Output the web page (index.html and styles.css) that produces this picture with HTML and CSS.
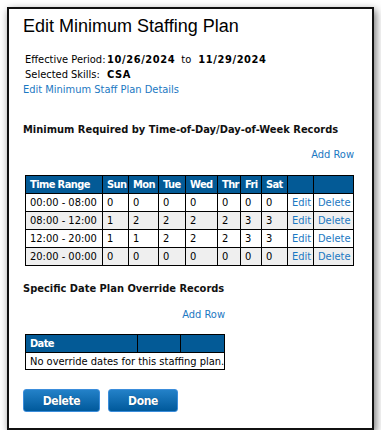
FILE: index.html
```html
<!DOCTYPE html>
<html lang="en">
<head>
  <meta charset="UTF-8" />
  <title>Edit Minimum Staffing Plan</title>
  <link rel="stylesheet" href="styles.css">
</head>
<body>

  <div class="dialog">
    <h1 class="dialog-title">Edit Minimum Staffing Plan</h1>

    <!-- Hlavicka planu -->
    <div class="plan-info">
      <span class="info-label">Effective Period:</span>
      <span class="info-value"><b>10/26/2024</b><span class="to">to</span><b>11/29/2024</b></span>
      <span class="info-label">Selected Skills:</span>
      <span class="info-value"><b>CSA</b></span>
    </div>
    <a href="#" class="link">Edit Minimum Staff Plan Details</a>

    <!-- Casove zaznamy -->
    <h2 class="section-title">Minimum Required by Time-of-Day/Day-of-Week Records</h2>
    <div class="records">
      <div class="add-row"><a href="#" class="link">Add Row</a></div>
      <table class="grid week-grid">
        <colgroup>
          <col style="width:77px"><col style="width:26px"><col style="width:30px"><col style="width:27px">
          <col style="width:32px"><col style="width:23px"><col style="width:21px"><col style="width:26px">
          <col style="width:26px"><col style="width:40px">
        </colgroup>
        <thead>
          <tr>
            <th>Time Range</th><th>Sun</th><th>Mon</th><th>Tue</th><th>Wed</th><th>Thr</th><th>Fri</th><th>Sat</th><th></th><th></th>
          </tr>
        </thead>
        <tbody id="week-rows"></tbody>
      </table>
    </div>

    <!-- Vynimky pre konkretne datumy -->
    <h2 class="section-title second">Specific Date Plan Override Records</h2>
    <div class="records narrow">
      <div class="add-row"><a href="#" class="link">Add Row</a></div>
      <table class="grid date-grid">
        <colgroup>
          <col style="width:112px"><col style="width:43px"><col style="width:44px">
        </colgroup>
        <thead>
          <tr><th>Date</th><th></th><th></th></tr>
        </thead>
        <tbody>
          <tr><td colspan="3">No override dates for this staffing plan.</td></tr>
        </tbody>
      </table>
    </div>

    <div class="actions">
      <button class="btn btn-delete">Delete</button>
      <button class="btn btn-done">Done</button>
    </div>
  </div>

<script>
  const rows = [
    {range: "00:00 - 08:00", counts: [0, 0, 0, 0, 0, 0, 0]},
    {range: "08:00 - 12:00", counts: [1, 2, 2, 2, 2, 3, 3]},
    {range: "12:00 - 20:00", counts: [1, 1, 2, 2, 2, 3, 3]},
    {range: "20:00 - 00:00", counts: [0, 0, 0, 0, 0, 0, 0]}
  ];

  const body = document.getElementById("week-rows");
  rows.forEach(row => {
    const tr = document.createElement("tr");
    tr.innerHTML = `
      <td>${row.range}</td>
      ${row.counts.map(c => `<td>${c}</td>`).join("")}
      <td><a href="#" class="link">Edit</a></td>
      <td><a href="#" class="link">Delete</a></td>
    `;
    body.appendChild(tr);
  });
</script>

</body>
</html>
```

FILE: styles.css
```css
body {
  margin: 0;
  background: #fff;
  font-family: "DejaVu Sans Condensed", "DejaVu Sans", Tahoma, sans-serif;
  font-size: 11px;
  line-height: 15px;
  color: #000;
}

.dialog {
  margin: 7px 0 0 7px;
  width: 363px;
  height: 419px;
  box-sizing: content-box;
  border: 2px solid #111;
  background: #fff;
  box-shadow: 2px 3px 8px rgba(0,0,0,0.55);
  padding: 0;
  position: relative;
}

.dialog-title {
  font-family: "Liberation Sans", Arial, sans-serif;
  font-weight: normal;
  font-size: 18px;
  line-height: 21px;
  margin: 7px 0 0 14px;
}

/* Informacie o plane */
.plan-info {
  display: grid;
  grid-template-columns: 82px auto;
  margin: 15px 0 0 16px;
}

.info-value b {
  font-weight: bold;
  letter-spacing: 0.6px;
}

.to {
  margin: 0 7px 0 6px;
}

.link {
  color: #1b78c2;
  text-decoration: none;
}

.dialog > .link {
  display: block;
  margin-left: 14px;
}

.section-title {
  font-size: 11px;
  line-height: 15px;
  font-weight: bold;
  margin: 25px 0 0 14px;
  color: #111;
}

.section-title.second {
  margin-top: 15px;
}

.records {
  width: 329px;
  margin: 10px 0 0 16px;
}

.records.narrow {
  width: 200px;
  margin-top: 11px;
}

.add-row {
  text-align: right;
  margin-bottom: 13px;
}

.narrow .add-row {
  margin-bottom: 12px;
}

/* Tabulky */
.grid {
  border-collapse: collapse;
  table-layout: fixed;
  width: 100%;
}

.grid th,
.grid td {
  border: 1px solid #000;
  padding: 1px 4px;
  text-align: left;
  white-space: nowrap;
  overflow: hidden;
  line-height: 15px;
  height: 15px;
}

.grid th {
  background: #035a96;
  color: #fff;
  font-weight: bold;
  letter-spacing: -0.6px;
  overflow: visible;
}

.grid tbody tr:nth-child(even) td {
  background: #efefef;
}

.date-grid td {
  padding-top: 1px;
  padding-bottom: 0;
}

.actions {
  display: flex;
  gap: 8px;
  margin: 19px 0 0 14px;
}

.btn {
  height: 23px;
  border: 1px solid #3b8ddb;
  border-radius: 3px;
  background: linear-gradient(#2381c8, #00599b);
  color: #fff;
  font-family: "DejaVu Sans Condensed", "DejaVu Sans", Tahoma, sans-serif;
  font-weight: bold;
  font-size: 12px;
  letter-spacing: -0.4px;
  padding: 0;
  text-shadow: 0 0 1px rgba(0,0,0,0.4);
  cursor: pointer;
}

.btn-delete {
  width: 77px;
}

.btn-done {
  width: 70px;
}
```
